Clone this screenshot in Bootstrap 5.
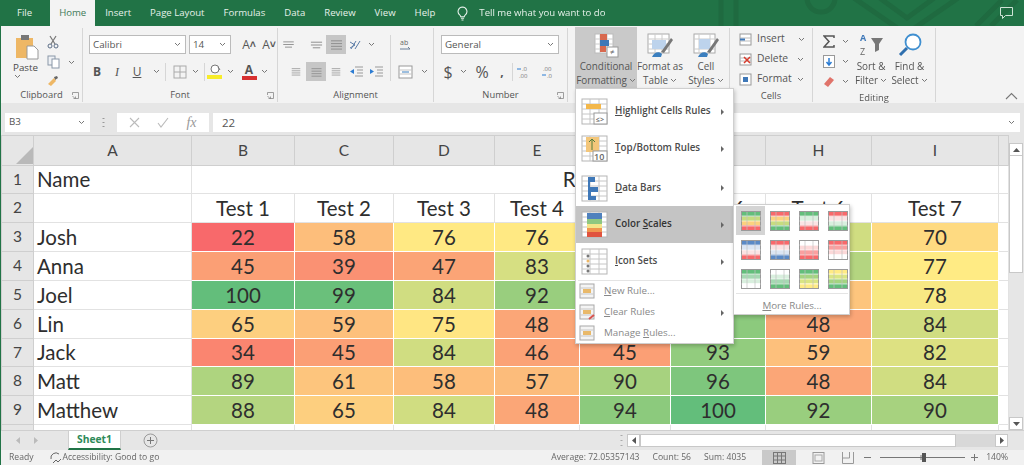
<!DOCTYPE html>
<html lang="en">
<head>
<meta charset="utf-8">
<title>Excel – Color Scales</title>
<link href="https://cdn.jsdelivr.net/npm/bootstrap@5.3.0/dist/css/bootstrap.min.css" rel="stylesheet">
<style>
html,body{margin:0;height:465px;overflow:hidden;background:#fff}
.xl-app{width:1024px;height:465px;position:relative;overflow:hidden;font-family:"Open Sans","Liberation Sans",sans-serif;font-size:10px;color:#4a4a4a;border-left:1px solid #217346;filter:blur(.4px)}
svg{display:block;flex:none}
.cv{width:7px;height:5px}
/* title */
.tbar{height:26px;background:#217346;position:relative;color:#e6f1ea;font-size:9.6px;line-height:26px}
.tbar-art{position:absolute;left:640px;top:0}
.ttab{flex:none}
.ttab-on{background:#f3f3f3;color:#3f7a58;height:26px;margin-left:18px;width:45px;text-align:center;margin-right:10px}
.tfile{margin-left:16px}.tg{margin-right:19px}
.tbulb{margin-left:22px}
.tell{margin-left:11px}
.tcom{position:absolute;left:998px;top:6px}
/* ribbon */
.rb{height:77px;background:#f3f3f3;position:relative}
.rb-grp{display:flex;flex-direction:column;height:74px;margin-top:2px;border-right:1px solid #d6d6d6;flex:none;position:relative}
.rb-body{flex:1;position:relative}
.rb-lab{height:14px;line-height:14px;text-align:center;font-size:9.4px;color:#555}
.dlg{position:absolute;right:3px;bottom:3px;width:7px;height:7px}
.g1{width:82px}.g2{width:195px}.g3{width:156px}.g4{width:134px}.g5{width:162px}.g6{width:83px}.g7{width:123px}
.clip-l{width:48px;padding:6px 0 0 3px}
.pst{width:46px;text-align:center;font-size:9.8px;line-height:13px}
.pst svg{margin:0 auto 1px 10px}
.clip-r{padding-top:7px;gap:6px;display:flex;flex-direction:column}
.in{background:#fff;border:1px solid #bbb;height:19px;line-height:17px;padding-left:3px;font-size:9.8px;color:#555;display:flex;align-items:center;justify-content:space-between;padding-right:4px;flex:none}
.in-f{width:97px;margin-left:6px}.in-s{width:42px;margin-left:3px}.in-n{width:118px;margin-left:7px}
.rw1{height:19px;margin-top:7px;display:flex;align-items:center}
.rw2{height:19px;margin-top:8px;display:flex;align-items:center}
.ti{width:20px;height:19px;display:flex;align-items:center;justify-content:center;flex:none;font-size:12px;color:#555}
.tc{width:10px;height:19px;display:flex;align-items:center;justify-content:center;flex:none}
.sel{background:#c6c6c6}
.vs{width:1px;height:18px;background:#d6d6d6;flex:none}
.sf{font-family:"Liberation Serif",serif;font-style:italic}
.fb{font-weight:700}
.al-div{width:1px;height:46px;background:#d6d6d6;margin-top:7px;flex:none}
.big{display:flex;flex-direction:column;align-items:center;text-align:center;line-height:14px;font-size:9.9px;height:61px;margin-top:-1px;padding-top:5px;flex:none;color:#555;white-space:nowrap}
.big svg.bi{margin-bottom:1px;height:26px}
.big-cf{width:62px;margin-left:7px;background:#c9c9c9}
.big-t{width:46px}
.big-c{width:46px}
.twoln{display:flex;align-items:center;gap:2px;justify-content:center}
.cell-rows{padding:1px 0 0 9px;display:flex;flex-direction:column;font-size:10.3px;color:#555}
.cell-rows>div{height:20px;display:flex;align-items:center;gap:5px}
.ed-l{width:38px;padding-left:10px;display:flex;flex-direction:column;padding-top:3px}
.ed-l>div{height:20px;display:flex;align-items:center;gap:7px}
.big-s{width:40px}.big-f{width:37px}
.colla{position:absolute;left:1004px;top:66px}
/* formula */
.fx{height:32px;background:#e6e6e6;padding-top:10px;gap:0}
.fbox{background:#fff;height:19px;display:flex;align-items:center;font-size:9.8px;flex:none;color:#555}
.fname{width:85px;margin-left:4px;padding:0 5px 0 4px;justify-content:space-between}
.fdots{width:27px;display:flex;justify-content:center;flex:none}
.fbtn{width:92px;justify-content:space-around;padding:0 4px;color:#999}
.fin{width:807px;margin-left:4px;padding-left:9px;justify-content:space-between;padding-right:5px}
.fval{font-size:11.5px}
.ffx{font-size:14px}
/* sheet */
.shw{height:295px;overflow:hidden;background:#fff;position:relative}
.sheet{table-layout:fixed;width:1007px;border-collapse:collapse;font-family:Lato,"Liberation Sans",sans-serif;color:#2e2e2e;font-size:20.5px;flex:none}
.sheet td,.sheet th{padding:0;border:1px solid #e2e2e2;text-align:center;font-weight:400;overflow:hidden;white-space:nowrap;line-height:1}
.sheet td[style]{border-color:rgba(255,255,255,.12)}
.sheet thead th{height:30px;background:#e6e6e6;border-color:#cfcfcf;font-size:15.5px;color:#444}
.sheet tbody th{background:#e6e6e6;border-color:#cfcfcf;font-size:15.5px;color:#444}
.sheet td.nm{text-align:left;padding-left:3px}
.h28{height:28px}.h29{height:29px}
.cnr{width:17px;height:17px;background:#b9b9b9;clip-path:polygon(100% 0,100% 100%,0 100%);margin:10px 0 0 14px}
.vsb{width:16px;background:#e6e6e6;flex:none;padding:8px 2px 0 0;display:flex;flex-direction:column}
.vbtn{height:13px;background:#fff;border:1px solid #c8c8c8;display:flex;align-items:center;justify-content:center;flex:none}
.vthumb{height:117px;background:#fff;border:1px solid #c8c8c8;border-top:0;flex:none}
.vtrack{flex:1}
/* tabs */
.tabs{height:20px;background:#e6e6e6;border-top:1px solid #cfcfcf;position:relative}
.tarr{width:18px;display:flex;justify-content:center;flex:none}
.shtab{width:53px;height:19px;background:#fff;color:#2d8a58;font-weight:700;font-size:10.3px;text-align:center;line-height:17px;border:1px solid #cfcfcf;border-top:0;border-bottom:2px solid #217346;margin-left:23px;flex:none}
.pls{margin-left:22px}
.hs{margin-left:auto;gap:0}
.hs-b{width:13px;height:13px;background:#fff;border:1px solid #c8c8c8;display:flex;align-items:center;justify-content:center;flex:none}
.hs-t{width:316px;height:13px;background:#fff;border:1px solid #c8c8c8;flex:none}
.hs-r{width:39px;background:#d8d8d8;height:13px;flex:none}
/* status */
.stat{height:15px;background:#f1f1f1;font-size:8.6px;line-height:15px;color:#666;white-space:nowrap}
.st-btn{height:15px;display:flex;align-items:center;justify-content:center;flex:none}
.st-sel{width:34px;background:#c9c9c9}
.st-gap{margin-right:13px}
/* menus */
.cmenu{position:absolute;background:#fff;border:1px solid #cfcfcf;box-shadow:1px 2px 4px rgba(0,0,0,.22);font-size:9.8px;color:#4c4c4c}
.cm1{left:574px;top:88px;width:159px;height:256px;padding-top:4px}
.cm-big{height:37px;display:flex;align-items:center;padding-left:5px;font-weight:600;position:relative}
.cm-gap{margin-top:3px;height:36px}
.cm-big svg.ic{margin-right:7px;width:27px;height:27px}
.cm-on{background:#c4c4c4;color:#333}
.cm-ar{position:absolute;right:9px;top:50%;margin-top:-3px;width:0;height:0;border-left:3px solid #666;border-top:3px solid transparent;border-bottom:3px solid transparent}
.cm-sep{height:1px;background:#e4e4e4;margin:0 2px 0 2px}
.cm-sm{height:21px;display:flex;align-items:center;padding-left:3px;color:#888;position:relative;font-size:9.8px}
.cm-sm svg{width:17px;height:17px;margin-right:8px}
.cm2{left:732px;top:204px;width:117px;height:111px;padding:1px 1px 0 2px}
.cs-grid{display:grid;grid-template-columns:repeat(4,29px);grid-auto-rows:29px}
.cs-it{display:flex;align-items:center;justify-content:center}
.cs-on{background:#d4d4d4}
.cm-more{border-top:1px solid #e4e4e4;margin-top:0;height:23px;line-height:24px;text-align:center;color:#888;font-size:9.8px}
</style>
</head>
<body>
<svg width="0" height="0" class="position-absolute">
<defs>
<symbol id="cv" viewBox="0 0 7 5"><path d="M1 1l2.5 2.5L6 1" fill="none" stroke="#777" stroke-width="1"/></symbol>
<symbol id="lines" viewBox="0 0 14 12"><path d="M1 2h12M1 5h12M1 8h12M1 11h12" stroke="#8a8a8a" stroke-width="1"/></symbol>
<symbol id="dl" viewBox="0 0 7 7"><path d="M.5 3V.5H6.5V6.5H3M.5 4l3 3M3.5 4.5v2h-2" fill="none" stroke="#888" stroke-width=".8"/></symbol>
<symbol id="mg" viewBox="0 0 27 27"><rect x="1" y="1" width="25" height="25" fill="#fff" stroke="#b5b5b5"/><path d="M1 6h25M1 11h25M1 16h25M1 21h25M9 1v25M18 1v25" stroke="#c6c6c6" stroke-width="1"/></symbol>
<symbol id="csf" viewBox="0 0 20 20"><rect x=".5" y=".5" width="19" height="19" fill="none" stroke="#9a9a9a"/><path d="M.5 5h19M.5 10h19M.5 15h19" stroke="#fff" stroke-width=".6"/><path d="M6 1v18M14 1v18" stroke="#c0c0c0" stroke-width=".7"/></symbol>
<symbol id="mini" viewBox="0 0 17 17"><rect x="1" y="1" width="14" height="14" fill="#f4f4f4" stroke="#a8a8a8"/><path d="M1 5h14M1 11h14" stroke="#c8c8c8"/><rect x="4" y="6" width="8" height="4" fill="#e9b96a"/></symbol>
</defs>
</svg>
<div class="xl-app">

<div class="tbar d-flex">
  <svg class="tbar-art" width="380" height="26" viewBox="0 0 380 26"><g fill="none" stroke="#1f6a40" stroke-width="5"><circle cx="180" cy="-2" r="14"/><path d="M210-4l55 38 55-38M236-4l30 22 30-22M335 26l26-26M350 26l26-26M80 26V0M95 26V0"/></g></svg>
  <span class="ttab tfile">File</span>
  <span class="ttab ttab-on">Home</span>
  <span class="ttab tg">Insert</span>
  <span class="ttab tg">Page Layout</span>
  <span class="ttab tg">Formulas</span>
  <span class="ttab tg">Data</span>
  <span class="ttab tg">Review</span>
  <span class="ttab tg">View</span>
  <span class="ttab">Help</span>
  <span class="d-flex align-items-center tbulb"><svg width="11" height="15" viewBox="0 0 11 15"><path d="M5.5 1a4.5 4.5 0 0 0-2.6 8.1c.6.5.8 1 .8 1.7h3.600c0-.7.2-1.200.8-1.700A4.500 4.500 0 0 0 5.500 1zM3.900 12.300h3.200M4.500 14h2" fill="none" stroke="#e6f1ea" stroke-width="1.100"/></svg></span>
  <span class="ttab tell">Tell me what you want to do</span>
  <svg class="tcom" width="15" height="14" viewBox="0 0 15 14"><path d="M1.500 1.500h12v8h-7l-3 3v-3h-2z" fill="none" stroke="#cfe3d6" stroke-width="1"/></svg>
</div>

<div class="rb d-flex">
  <!-- Clipboard -->
  <div class="rb-grp g1">
    <div class="rb-body d-flex">
      <div class="clip-l pst">
        <svg width="26" height="26" viewBox="0 0 26 26"><rect x="2" y="4" width="17" height="20" fill="#eeb765"/><rect x="7" y="1" width="8" height="5" fill="#777"/><path d="M13 12h7l4 4v9H13z" fill="#fff" stroke="#999"/></svg>
        <div>Paste</div>
        <div class="d-flex justify-content-center"><svg class="cv"><use href="#cv"/></svg></div>
      </div>
      <div class="clip-r">
        <svg width="12" height="14" viewBox="0 0 12 14"><path d="M3 1l5 8M9 1L4 9" stroke="#777" stroke-width="1.200"/><circle cx="3" cy="11" r="2" fill="none" stroke="#5b6d86"/><circle cx="9" cy="11" r="2" fill="none" stroke="#5b6d86"/></svg>
        <div class="d-flex align-items-center gap-1"><svg width="13" height="14" viewBox="0 0 13 14"><rect x="1" y="1" width="7" height="9" fill="#eef1f5" stroke="#8a97a8"/><rect x="5" y="4" width="7" height="9" fill="#fff" stroke="#8a97a8"/></svg><svg class="cv ms-1"><use href="#cv"/></svg></div>
        <svg width="12" height="13" viewBox="0 0 12 13"><path d="M7 2l3-1 1 2-3 2z" fill="#666"/><path d="M1 9l6-6 2 3-5 5z" fill="#eeb765"/></svg>
      </div>
    </div>
    <div class="rb-lab">Clipboard<svg class="dlg"><use href="#dl"/></svg></div>
  </div>
  <!-- Font -->
  <div class="rb-grp g2">
    <div class="rb-body">
      <div class="rw1">
        <div class="in in-f"><span>Calibri</span><svg class="cv"><use href="#cv"/></svg></div>
        <div class="in in-s"><span>14</span><svg class="cv"><use href="#cv"/></svg></div>
        <div class="ti ms-2">A<small class="fb">˄</small></div>
        <div class="ti">A<small class="fb">˅</small></div>
      </div>
      <div class="rw2">
        <div class="ti fb ms-1">B</div>
        <div class="ti sf">I</div>
        <div class="ti text-decoration-underline">U</div>
        <div class="tc ms-1"><svg class="cv"><use href="#cv"/></svg></div>
        <div class="vs ms-1"></div>
        <div class="ti ms-1"><svg width="14" height="14" viewBox="0 0 14 14"><rect x="1" y="1" width="12" height="12" fill="none" stroke="#aaa"/><path d="M7 1v12M1 7h12" stroke="#aaa"/></svg></div>
        <div class="tc"><svg class="cv"><use href="#cv"/></svg></div>
        <div class="vs ms-1"></div>
        <div class="ti"><svg width="16" height="17" viewBox="0 0 16 17"><circle cx="8" cy="6" r="4" fill="#fff" stroke="#777"/><path d="M11 4l2 3" stroke="#777"/><rect x="0" y="12" width="15" height="4" fill="#f7ec2a"/></svg></div>
        <div class="tc"><svg class="cv"><use href="#cv"/></svg></div>
        <div class="ti ms-1 flex-column fb"><span class="lh-1">A</span><svg width="15" height="4" viewBox="0 0 15 4"><rect width="15" height="4" fill="#d73030"/></svg></div>
        <div class="tc"><svg class="cv"><use href="#cv"/></svg></div>
      </div>
    </div>
    <div class="rb-lab">Font<svg class="dlg"><use href="#dl"/></svg></div>
  </div>
  <!-- Alignment -->
  <div class="rb-grp g3">
    <div class="rb-body d-flex">
      <div class="flex-none">
        <div class="rw1">
          <div class="ti"><svg width="13" height="7" viewBox="0 0 14 8"><path d="M1 1h12M1 4h12M3 7h8" stroke="#888"/></svg></div>
          <div class="ti ms-2"><svg width="13" height="8" viewBox="0 0 14 8"><path d="M1 1h12M1 4h12M3 7h8" stroke="#888"/></svg></div>
          <div class="ti sel"><svg width="13" height="11"><use href="#lines"/></svg></div>
          <div class="ti"><svg width="14" height="12" viewBox="0 0 14 12"><path d="M2 10l5-8M6 10l5-8M1 3l5 3-5 3" fill="none" stroke="#5a7ba6"/></svg></div>
          <div class="tc"><svg class="cv"><use href="#cv"/></svg></div>
        </div>
        <div class="rw2">
          <div class="ti ms-2"><svg width="10" height="9"><use href="#lines"/></svg></div>
          <div class="ti sel"><svg width="13" height="10"><use href="#lines"/></svg></div>
          <div class="ti"><svg width="10" height="9"><use href="#lines"/></svg></div>
          <div class="ti"><svg width="14" height="11" viewBox="0 0 14 11"><path d="M6 1h8M6 10h8M8 4h6M8 7h6" stroke="#999"/><path d="M5 3L1 5.500 5 8z" fill="#2b7cd3"/></svg></div>
          <div class="ti"><svg width="14" height="11" viewBox="0 0 14 11"><path d="M6 1h8M6 10h8M8 4h6M8 7h6" stroke="#999"/><path d="M1 3l4 2.500L1 8z" fill="#2b7cd3"/></svg></div>
        </div>
      </div>
      <div class="al-div ms-1"></div>
      <div class="flex-none">
        <div class="rw1"><div class="ti ms-1 lh-1 text-center" ><svg width="13" height="14" viewBox="0 0 13 14"><text x="1" y="7" font-size="7" fill="#666" font-family="Open Sans">ab</text><path d="M1 11h10l-2-2" fill="none" stroke="#6a7f9a"/></svg></div></div>
        <div class="rw2"><div class="ti ms-1"><svg width="15" height="14" viewBox="0 0 15 14"><rect x="1" y="1" width="13" height="12" fill="#fff" stroke="#999"/><path d="M1 5h13M1 9h13" stroke="#c5c5c5"/><path d="M4 7h7" stroke="#3b7fbf"/></svg></div><div class="tc ms-1"><svg class="cv"><use href="#cv"/></svg></div></div>
      </div>
    </div>
    <div class="rb-lab">Alignment</div>
  </div>
  <!-- Number -->
  <div class="rb-grp g4">
    <div class="rb-body">
      <div class="rw1"><div class="in in-n"><span>General</span><svg class="cv"><use href="#cv"/></svg></div></div>
      <div class="rw2">
        <div class="ti ms-1 fs-6">$</div>
        <div class="tc"><svg class="cv"><use href="#cv"/></svg></div>
        <div class="ti ms-1 fs-6">%</div>
        <div class="ti fb">,</div>
        <div class="vs"></div>
        <div class="ti"><svg width="14" height="14" viewBox="0 0 14 14"><text x="6" y="6" font-size="6" fill="#777" font-family="Open Sans">.0</text><text x="3" y="13" font-size="6" fill="#777" font-family="Open Sans">.00</text><path d="M1 4h4" stroke="#2b7cd3"/></svg></div>
        <div class="ti ms-1"><svg width="14" height="14" viewBox="0 0 14 14"><text x="3" y="6" font-size="6" fill="#777" font-family="Open Sans">.00</text><text x="7" y="13" font-size="6" fill="#777" font-family="Open Sans">.0</text><path d="M2 10h4" stroke="#2b7cd3"/></svg></div>
      </div>
    </div>
    <div class="rb-lab">Number<svg class="dlg"><use href="#dl"/></svg></div>
  </div>
  <!-- Styles -->
  <div class="rb-grp g5">
    <div class="rb-body d-flex">
      <div class="big big-cf">
        <svg class="bi" width="28" height="26" viewBox="0 0 28 26"><rect x="3" y="2" width="18" height="19" fill="#fff" stroke="#bbb"/><path d="M3 7h18M3 12h18M3 17h18M8 2v19M15 2v19" stroke="#ccc"/><rect x="8" y="2" width="7" height="6" fill="#d8694f"/><rect x="8" y="8" width="9" height="6" fill="#3f78b8"/><rect x="8" y="14" width="6" height="6" fill="#d8694f"/><rect x="15" y="15" width="11" height="10" fill="#fff" stroke="#999"/><text x="18" y="23" font-size="8" fill="#666" font-family="Open Sans">≠</text></svg>
        <div>Conditional</div><div class="twoln">Formatting<svg class="cv"><use href="#cv"/></svg></div>
      </div>
      <div class="big big-t">
        <svg class="bi" width="28" height="26" viewBox="0 0 28 26"><rect x="2" y="2" width="21" height="19" fill="#fff" stroke="#aaa"/><path d="M2 7h21M2 12h21M2 17h21M9 2v19M16 2v19" stroke="#ccc"/><rect x="6" y="8" width="14" height="9" fill="#bdd3ec"/><path d="M6 25c2-5 7-6 10-3l-1 3z" fill="#3b7fbf"/><path d="M15 20L25 6l2 2-9 13z" fill="#777"/></svg>
        <div>Format as</div><div class="twoln">Table<svg class="cv"><use href="#cv"/></svg></div>
      </div>
      <div class="big big-c">
        <svg class="bi" width="28" height="26" viewBox="0 0 28 26"><rect x="2" y="2" width="21" height="19" fill="#fff" stroke="#aaa"/><path d="M2 7h21M2 17h21M7 2v19M18 2v19" stroke="#ccc"/><rect x="7" y="7" width="11" height="10" fill="#bdd3ec"/><path d="M6 25c2-5 7-6 10-3l-1 3z" fill="#3b7fbf"/><path d="M15 20L25 6l2 2-9 13z" fill="#777"/></svg>
        <div>Cell</div><div class="twoln">Styles<svg class="cv"><use href="#cv"/></svg></div>
      </div>
    </div>
    <div class="rb-lab"></div>
  </div>
  <!-- Cells -->
  <div class="rb-grp g6">
    <div class="rb-body cell-rows">
      <div><svg width="13" height="13" viewBox="0 0 13 13"><rect x="1" y="1" width="11" height="11" fill="#fff" stroke="#999"/><path d="M1 5h11M1 8h11" stroke="#bbb"/><path d="M1 6.500h5" stroke="#3f78b8" stroke-width="2"/></svg><span>Insert</span><svg class="cv ms-2"><use href="#cv"/></svg></div>
      <div><svg width="13" height="13" viewBox="0 0 13 13"><rect x="1" y="1" width="11" height="11" fill="#fff" stroke="#999"/><path d="M1 5h11M1 8h11" stroke="#bbb"/><path d="M5 4l6 6M11 4l-6 6" stroke="#d73a2b" stroke-width="1.500"/></svg><span>Delete</span><svg class="cv ms-1"><use href="#cv"/></svg></div>
      <div><svg width="13" height="13" viewBox="0 0 13 13"><rect x="1" y="1" width="11" height="11" fill="#fff" stroke="#999"/><rect x="4" y="4" width="5" height="5" fill="#3f78b8"/></svg><span>Format</span><svg class="cv"><use href="#cv"/></svg></div>
    </div>
    <div class="rb-lab">Cells</div>
  </div>
  <!-- Editing -->
  <div class="rb-grp g7">
    <div class="rb-body d-flex">
      <div class="ed-l">
        <div><svg width="12" height="13" viewBox="0 0 12 13"><path d="M11 3V1H1l5 5.500L1 12h10v-2" fill="none" stroke="#555" stroke-width="1.500"/></svg><svg class="cv"><use href="#cv"/></svg></div>
        <div><svg width="12" height="13" viewBox="0 0 12 13"><rect x=".5" y=".5" width="11" height="12" fill="#fff" stroke="#999"/><path d="M6 3v6M3.500 7L6 10l2.500-3" fill="none" stroke="#2b7cd3" stroke-width="1.500"/></svg><svg class="cv"><use href="#cv"/></svg></div>
        <div><svg width="12" height="13" viewBox="0 0 12 13"><path d="M1 9l6-7 4 3-6 7z" fill="#e0736a"/></svg><svg class="cv"><use href="#cv"/></svg></div>
      </div>
      <div class="big big-s">
        <svg class="bi" width="28" height="26" viewBox="0 0 28 26"><text x="3" y="9" font-size="9" font-weight="700" fill="#3f78b8" font-family="Open Sans">A</text><text x="3" y="23" font-size="9" fill="#666" font-family="Open Sans">Z</text><path d="M14 6h12l-4 6v6l-4 2v-8z" fill="#777"/></svg>
        <div>Sort &amp;</div><div class="twoln">Filter<svg class="cv"><use href="#cv"/></svg></div>
      </div>
      <div class="big big-f">
        <svg class="bi" width="28" height="26" viewBox="0 0 28 26"><circle cx="17" cy="10" r="7.500" fill="#fff" stroke="#3f8fd0" stroke-width="1.800"/><path d="M11 16l-7 7" stroke="#2f6fae" stroke-width="3"/></svg>
        <div>Find &amp;</div><div class="twoln">Select<svg class="cv"><use href="#cv"/></svg></div>
      </div>
    </div>
    <div class="rb-lab">Editing</div>
  </div>
  <svg class="colla" width="13" height="8" viewBox="0 0 13 8"><path d="M1 7l5.500-5.500L12 7" fill="none" stroke="#777" stroke-width="1.100"/></svg>
</div>

<div class="fx d-flex">
  <div class="fbox fname"><span>B3</span><svg class="cv"><use href="#cv"/></svg></div>
  <div class="fdots"><svg width="3" height="19" viewBox="0 0 3 19"><path d="M1.500 5v1M1.500 9v1M1.500 13v1" stroke="#999" stroke-width="2"/></svg></div>
  <div class="fbox fbtn">
    <svg width="11" height="11" viewBox="0 0 11 11"><path d="M1 1l9 9M10 1l-9 9" stroke="#bbb" stroke-width="1.100"/></svg>
    <svg width="12" height="11" viewBox="0 0 12 11"><path d="M1 6l3 4 7-9" fill="none" stroke="#bbb" stroke-width="1.100"/></svg>
    <span class="sf ffx">fx</span>
  </div>
  <div class="fbox fin"><span class="fval">22</span><svg class="cv"><use href="#cv"/></svg></div>
</div>

<div class="shw d-flex">
  <table class="sheet">
    <colgroup><col style="width:32px"><col style="width:158px"><col style="width:103px"><col style="width:99px"><col style="width:101px"><col style="width:85px"><col style="width:91px"><col style="width:95px"><col style="width:106px"><col style="width:127px"><col style="width:10px"></colgroup>
    <thead><tr><th><div class="cnr"></div></th><th>A</th><th>B</th><th>C</th><th>D</th><th>E</th><th></th><th></th><th>H</th><th>I</th><th></th></tr></thead>
    <tbody>
      <tr class="h28"><th>1</th><td class="nm">Name</td><td colspan="8">Results</td><td></td></tr>
      <tr class="h29"><th>2</th><td></td><td>Test 1</td><td>Test 2</td><td>Test 3</td><td>Test 4</td><td></td><td>Test 6</td><td>Test 6</td><td>Test 7</td><td></td></tr>
      <tr class="h29"><th>3</th><td class="nm">Josh</td><td style="background:#f8696b">22</td><td style="background:#fdbe7b">58</td><td style="background:#ffe983">76</td><td style="background:#ffe983">76</td><td style="background:#fdcf7f"></td><td style="background:#d0dd81"></td><td style="background:#d0dd81"></td><td style="background:#feda81">70</td><td></td></tr>
      <tr class="h29"><th>4</th><td class="nm">Anna</td><td style="background:#fb9f75">45</td><td style="background:#fa9173">39</td><td style="background:#fba476">47</td><td style="background:#d6df82">83</td><td style="background:#fdcf7f"></td><td style="background:#d0dd81"></td><td style="background:#b4d580"></td><td style="background:#ffeb84">77</td><td></td></tr>
      <tr class="h29"><th>5</th><td class="nm">Joel</td><td style="background:#63be7b">100</td><td style="background:#6ac07b">99</td><td style="background:#d0dd81">84</td><td style="background:#99ce7e">92</td><td style="background:#fdc57d"></td><td style="background:#d0dd81"></td><td style="background:#fdc57d"></td><td style="background:#f8e984">78</td><td></td></tr>
      <tr class="h29"><th>6</th><td class="nm">Lin</td><td style="background:#fdcf7f">65</td><td style="background:#fdc07c">59</td><td style="background:#ffe683">75</td><td style="background:#fba677">48</td><td style="background:#fba677"></td><td style="background:#8cca7d"></td><td style="background:#fba677">48</td><td style="background:#d0dd81">84</td><td></td></tr>
      <tr class="h28"><th>7</th><td class="nm">Jack</td><td style="background:#fa8570">34</td><td style="background:#fb9f75">45</td><td style="background:#d0dd81">84</td><td style="background:#fba276">46</td><td style="background:#fb9f75">45</td><td style="background:#92cc7e">93</td><td style="background:#fdc07c">59</td><td style="background:#dde182">82</td><td></td></tr>
      <tr class="h29"><th>8</th><td class="nm">Matt</td><td style="background:#aed47f">89</td><td style="background:#fdc57d">61</td><td style="background:#fdbe7b">58</td><td style="background:#fcbc7b">57</td><td style="background:#a7d27f">90</td><td style="background:#7ec67d">96</td><td style="background:#fba677">48</td><td style="background:#d0dd81">84</td><td></td></tr>
      <tr class="h29"><th>9</th><td class="nm">Matthew</td><td style="background:#b4d580">88</td><td style="background:#fdcf7f">65</td><td style="background:#d0dd81">84</td><td style="background:#fba677">48</td><td style="background:#8cca7d">94</td><td style="background:#63be7b">100</td><td style="background:#99ce7e">92</td><td style="background:#a7d27f">90</td><td></td></tr>
      <tr class="h29"><th></th><td></td><td></td><td></td><td></td><td></td><td></td><td></td><td></td><td></td><td></td></tr>
    </tbody>
  </table>
  <div class="vsb">
    <div class="vbtn"><svg width="7" height="4" viewBox="0 0 7 4"><path d="M0 4l3.500-4L7 4z" fill="#555"/></svg></div>
    <div class="vthumb"></div>
    <div class="vtrack"></div>
    <div class="vbtn"><svg width="7" height="4" viewBox="0 0 7 4"><path d="M0 0l3.500 4L7 0z" fill="#555"/></svg></div>
  </div>
</div>

<div class="tabs d-flex align-items-center">
  <div class="tarr ms-2"><svg width="4" height="7" viewBox="0 0 4 7"><path d="M4 0L0 3.500 4 7z" fill="#bbb"/></svg></div>
  <div class="tarr"><svg width="4" height="7" viewBox="0 0 4 7"><path d="M0 0l4 3.500L0 7z" fill="#bbb"/></svg></div>
  <div class="shtab align-self-start">Sheet1</div>
  <svg class="pls" width="15" height="15" viewBox="0 0 15 15"><circle cx="7.500" cy="7.500" r="6.500" fill="none" stroke="#999"/><path d="M7.500 4v7M4 7.500h7" stroke="#777"/></svg>
  <div class="hs d-flex align-items-center">
    <svg class="me-1" width="3" height="13" viewBox="0 0 3 13"><path d="M1.500 1v1M1.500 6v1M1.500 11v1" stroke="#aaa" stroke-width="2"/></svg>
    <div class="hs-b"><svg width="4" height="7" viewBox="0 0 4 7"><path d="M4 0L0 3.500 4 7z" fill="#555"/></svg></div>
    <div class="hs-t"></div>
    <div class="hs-r"></div>
    <div class="hs-b"><svg width="4" height="7" viewBox="0 0 4 7"><path d="M0 0l4 3.500L0 7z" fill="#555"/></svg></div>
    <div class="ms-3"></div>
  </div>
</div>

<div class="stat d-flex align-items-center">
  <span class="ms-1 ps-1">Ready</span>
  <svg class="ms-3" width="13" height="12" viewBox="0 0 13 12"><path d="M2 7a5 5 0 0 1 8-5M4 11l3-3 2 2 3-3" fill="none" stroke="#666"/></svg>
  <span>Accessibility: Good to go</span>
  <span class="d-flex align-items-center ms-auto">
    <span class="st-gap">Average: 72.05357143</span>
    <span class="st-gap">Count: 56</span>
    <span class="me-3">Sum: 4035</span>
    <span class="st-btn st-sel"><svg width="13" height="12" viewBox="0 0 13 12"><rect x=".5" y=".5" width="12" height="11" fill="none" stroke="#777"/><path d="M4.500 0v12M8.500 0v12M0 4h13M0 8h13" stroke="#777"/></svg></span>
    <span class="st-btn ms-3"><svg width="30" height="12" viewBox="0 0 30 12"><rect x="1" y=".5" width="11" height="11" fill="none" stroke="#999"/><rect x="3" y="3" width="7" height="6" fill="none" stroke="#aaa"/></svg></span>
    <svg width="12" height="12" viewBox="0 0 12 12"><path d="M.5 0v11.500h11V0M.5 6h7V0" fill="none" stroke="#999"/></svg>
    <svg class="ms-2" width="105" height="13" viewBox="0 0 105 13"><path d="M2 6.500h7M18 6.500h85" stroke="#777"/><rect x="60" y="2" width="4" height="9" fill="#555"/><path d="M59 4v5" stroke="#777"/></svg>
    <svg class="ms-1" width="7" height="7" viewBox="0 0 7 7"><path d="M0 3.500h7M3.500 0v7" stroke="#777"/></svg>
    <span class="ms-2 me-3">140%</span>
  </span>
</div>

<!-- Conditional formatting menu -->
<div class="cmenu cm1">
  <div class="cm-big"><svg class="ic" viewBox="0 0 27 27"><use href="#mg"/><rect x="5" y="6" width="15" height="5" fill="#f3b74a"/><rect x="13" y="15" width="13" height="11" fill="#fff" stroke="#999"/><text x="15" y="24" font-size="7" fill="#666" font-family="Open Sans">≤&gt;</text></svg><span><u>H</u>ighlight Cells Rules</span><i class="cm-ar"></i></div>
  <div class="cm-big"><svg class="ic" viewBox="0 0 27 27"><use href="#mg"/><rect x="5" y="2" width="13" height="15" fill="#f3c67a"/><path d="M11 4v11M8 7l3-3 3 3" fill="none" stroke="#4f7d3d"/><rect x="12" y="16" width="14" height="10" fill="#fff" stroke="#999"/><text x="13" y="25" font-size="9" fill="#666" font-family="Open Sans">10</text></svg><span><u>T</u>op/Bottom Rules</span><i class="cm-ar"></i></div>
  <div class="cm-big cm-gap"><svg class="ic" viewBox="0 0 27 27"><use href="#mg"/><path d="M7 2h7v5H9v5h8v5h-7v4h5v4H7z" fill="#3f78b8"/></svg><span><u>D</u>ata Bars</span><i class="cm-ar"></i></div>
  <div class="cm-big cm-on"><svg class="ic" viewBox="0 0 27 27"><use href="#mg"/><rect x="6" y="2" width="15" height="6" fill="#4f81bd"/><rect x="6" y="8" width="15" height="5" fill="#8fc780"/><rect x="6" y="13" width="15" height="4" fill="#f4e58a"/><rect x="6" y="17" width="15" height="4" fill="#f0964f"/><rect x="6" y="21" width="15" height="5" fill="#e0533f"/></svg><span>Color <u>S</u>cales</span><i class="cm-ar"></i></div>
  <div class="cm-big"><svg class="ic" viewBox="0 0 27 27"><use href="#mg"/><circle cx="7" cy="8" r="1.500" fill="#777"/><circle cx="7" cy="13" r="1.500" fill="#eeb765"/><circle cx="7" cy="18" r="1.500" fill="#777"/><circle cx="7" cy="23" r="1.500" fill="#777"/></svg><span><u>I</u>con Sets</span><i class="cm-ar"></i></div>
  <div class="cm-sep"></div>
  <div class="cm-sm"><svg><use href="#mini"/></svg><span><u>N</u>ew Rule...</span></div>
  <div class="cm-sm"><svg viewBox="0 0 17 17"><use href="#mini"/><path d="M10 15l5-4" stroke="#d9534f" stroke-width="2"/></svg><span><u>C</u>lear Rules</span><i class="cm-ar"></i></div>
  <div class="cm-sm"><svg><use href="#mini"/></svg><span>Manage <u>R</u>ules...</span></div>
</div>

<!-- Color scales submenu -->
<div class="cmenu cm2">
  <div class="cs-grid">
    <div class="cs-it cs-on"><svg width="20" height="20" viewBox="0 0 20 20"><rect x="1" y="1" width="18" height="4.500" fill="#63be7b"/><rect x="1" y="5.500" width="18" height="4.500" fill="#c6dc7f"/><rect x="1" y="10" width="18" height="4.500" fill="#fcd27e"/><rect x="1" y="14.500" width="18" height="4.500" fill="#f8696b"/><use href="#csf"/></svg></div>
    <div class="cs-it"><svg width="20" height="20" viewBox="0 0 20 20"><rect x="1" y="1" width="18" height="4.500" fill="#f8696b"/><rect x="1" y="5.500" width="18" height="4.500" fill="#fcd27e"/><rect x="1" y="10" width="18" height="4.500" fill="#c6dc7f"/><rect x="1" y="14.500" width="18" height="4.500" fill="#63be7b"/><use href="#csf"/></svg></div>
    <div class="cs-it"><svg width="20" height="20" viewBox="0 0 20 20"><rect x="1" y="1" width="18" height="4.500" fill="#63be7b"/><rect x="1" y="5.500" width="18" height="4.500" fill="#d9efde"/><rect x="1" y="10" width="18" height="4.500" fill="#fbe3e3"/><rect x="1" y="14.500" width="18" height="4.500" fill="#f8696b"/><use href="#csf"/></svg></div>
    <div class="cs-it"><svg width="20" height="20" viewBox="0 0 20 20"><rect x="1" y="1" width="18" height="4.500" fill="#f8696b"/><rect x="1" y="5.500" width="18" height="4.500" fill="#fbe3e3"/><rect x="1" y="10" width="18" height="4.500" fill="#d9efde"/><rect x="1" y="14.500" width="18" height="4.500" fill="#63be7b"/><use href="#csf"/></svg></div>
    <div class="cs-it"><svg width="20" height="20" viewBox="0 0 20 20"><rect x="1" y="1" width="18" height="4.500" fill="#5a8ac6"/><rect x="1" y="5.500" width="18" height="4.500" fill="#dbe6f3"/><rect x="1" y="10" width="18" height="4.500" fill="#fbe3e3"/><rect x="1" y="14.500" width="18" height="4.500" fill="#f8696b"/><use href="#csf"/></svg></div>
    <div class="cs-it"><svg width="20" height="20" viewBox="0 0 20 20"><rect x="1" y="1" width="18" height="4.500" fill="#f8696b"/><rect x="1" y="5.500" width="18" height="4.500" fill="#fbe3e3"/><rect x="1" y="10" width="18" height="4.500" fill="#dbe6f3"/><rect x="1" y="14.500" width="18" height="4.500" fill="#5a8ac6"/><use href="#csf"/></svg></div>
    <div class="cs-it"><svg width="20" height="20" viewBox="0 0 20 20"><rect x="1" y="1" width="18" height="4.500" fill="#fff"/><rect x="1" y="5.500" width="18" height="4.500" fill="#fcd9d9"/><rect x="1" y="10" width="18" height="4.500" fill="#fa9f9f"/><rect x="1" y="14.500" width="18" height="4.500" fill="#f8696b"/><use href="#csf"/></svg></div>
    <div class="cs-it"><svg width="20" height="20" viewBox="0 0 20 20"><rect x="1" y="1" width="18" height="4.500" fill="#f8696b"/><rect x="1" y="5.500" width="18" height="4.500" fill="#fa9f9f"/><rect x="1" y="10" width="18" height="4.500" fill="#fcd9d9"/><rect x="1" y="14.500" width="18" height="4.500" fill="#fff"/><use href="#csf"/></svg></div>
    <div class="cs-it"><svg width="20" height="20" viewBox="0 0 20 20"><rect x="1" y="1" width="18" height="4.500" fill="#63be7b"/><rect x="1" y="5.500" width="18" height="4.500" fill="#a5d9b2"/><rect x="1" y="10" width="18" height="4.500" fill="#d9efde"/><rect x="1" y="14.500" width="18" height="4.500" fill="#fff"/><use href="#csf"/></svg></div>
    <div class="cs-it"><svg width="20" height="20" viewBox="0 0 20 20"><rect x="1" y="1" width="18" height="4.500" fill="#fff"/><rect x="1" y="5.500" width="18" height="4.500" fill="#d9efde"/><rect x="1" y="10" width="18" height="4.500" fill="#a5d9b2"/><rect x="1" y="14.500" width="18" height="4.500" fill="#63be7b"/><use href="#csf"/></svg></div>
    <div class="cs-it"><svg width="20" height="20" viewBox="0 0 20 20"><rect x="1" y="1" width="18" height="4.500" fill="#63be7b"/><rect x="1" y="5.500" width="18" height="4.500" fill="#a5d480"/><rect x="1" y="10" width="18" height="4.500" fill="#d9e583"/><rect x="1" y="14.500" width="18" height="4.500" fill="#ffeb84"/><use href="#csf"/></svg></div>
    <div class="cs-it"><svg width="20" height="20" viewBox="0 0 20 20"><rect x="1" y="1" width="18" height="4.500" fill="#ffeb84"/><rect x="1" y="5.500" width="18" height="4.500" fill="#d9e583"/><rect x="1" y="10" width="18" height="4.500" fill="#a5d480"/><rect x="1" y="14.500" width="18" height="4.500" fill="#63be7b"/><use href="#csf"/></svg></div>
  </div>
  <div class="cm-more"><u>M</u>ore Rules...</div>
</div>

</div>
<script src="https://cdn.jsdelivr.net/npm/bootstrap@5.3.0/dist/js/bootstrap.bundle.min.js"></script>
</body>
</html>
